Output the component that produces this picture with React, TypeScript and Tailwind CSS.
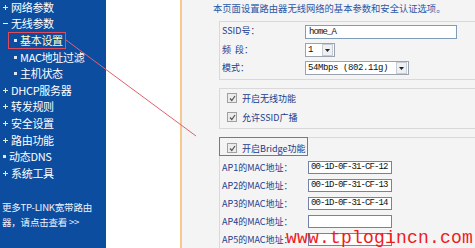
import React from "react";

type Item = { b: "+" | "-" | "dot"; t: string; sub?: boolean; active?: boolean };

const items: Item[] = [
  { b: "+", t: "网络参数" },
  { b: "-", t: "无线参数" },
  { b: "dot", t: "基本设置", sub: true, active: true },
  { b: "dot", t: "MAC地址过滤", sub: true },
  { b: "dot", t: "主机状态", sub: true },
  { b: "+", t: "DHCP服务器" },
  { b: "+", t: "转发规则" },
  { b: "+", t: "安全设置" },
  { b: "+", t: "路由功能" },
  { b: "dot", t: "动态DNS" },
  { b: "+", t: "系统工具" },
];

function Bullet({ b }: { b: Item["b"] }) {
  if (b === "+")
    return (
      <svg width="5" height="5" viewBox="0 0 5 5" className="shrink-0">
        <rect x="2" y="0" width="1" height="5" fill="#d8f2d0" />
        <rect x="0" y="2" width="5" height="1" fill="#d8f2d0" />
      </svg>
    );
  if (b === "-")
    return (
      <svg width="5" height="5" viewBox="0 0 5 5" className="shrink-0">
        <rect x="0" y="2" width="5" height="1" fill="#e6f0ff" />
      </svg>
    );
  return <span className="block w-[3px] h-[3px] bg-[#dfe8ff] shrink-0" />;
}

function Check() {
  return (
    <span className="flex items-center justify-center w-[10px] h-[10px] border border-[#a0a0a0] bg-[#ececec] shrink-0">
      <svg width="7" height="7" viewBox="0 0 7 7">
        <path d="M1 3.5 L2.8 5.5 L6 1" stroke="#555" strokeWidth="1.2" fill="none" />
      </svg>
    </span>
  );
}

function Select({ value, w }: { value: string; w: string }) {
  return (
    <div className={`flex items-center h-[14px] border border-[#9aa3ad] bg-white ${w}`}>
      <span className="flex-1 pl-[2px] font-['Liberation_Mono',monospace] text-[9px] tracking-[-0.4px] text-[#111] leading-none whitespace-nowrap overflow-hidden">
        {value}
      </span>
      <span className="flex items-center justify-center w-[11px] h-[12px] mr-[1px] bg-[#eef0f4] border border-[#c8ccd4]">
        <svg width="5" height="3" viewBox="0 0 5 3">
          <path d="M0 0 H5 L2.5 3 Z" fill="#222" />
        </svg>
      </span>
    </div>
  );
}

const macs = ["00-1D-0F-31-CF-12", "00-1D-0F-31-CF-13", "00-1D-0F-31-CF-14", "", ""];

export default function App() {
  return (
    <div className="relative flex w-[475px] h-[248px] overflow-hidden bg-white font-['Noto_Sans_CJK_SC',sans-serif]">
      {/* sidebar */}
      <div className="w-[106px] h-full bg-[#0c4d9f] text-white text-[11px] flex flex-col shrink-0">
        <div className="flex flex-col -mt-[1px]">
          {items.map((it) => (
            <div key={it.t} className={`flex items-center h-[16.6px] ${it.sub ? "pl-[14px] gap-[3px]" : "pl-[3px] gap-[3px]"}`}>
              <Bullet b={it.b} />
              <span className={`leading-none whitespace-nowrap tracking-[-0.3px] ${it.active ? "text-[#fbffc8]" : "text-white"}`}>{it.t}</span>
            </div>
          ))}
        </div>
        <div className="mt-[18px] pl-[2px] leading-[15px] text-[9.5px] tracking-[-0.2px] text-[#eef3ff] whitespace-nowrap">
          更多TP-LINK宽带路由
          <br />
          器，请点击查看 &gt;&gt;
        </div>
      </div>

      {/* white gap */}
      <div className="w-[74px] h-full bg-white shrink-0" />
      {/* orange line */}
      <div className="w-[2px] h-full bg-[#f7c88e] shrink-0" />

      {/* content */}
      <div className="flex-1 h-full bg-[#f4f4f5] pl-[31px] text-[9px] text-[#1b3b8a] flex flex-col">
        <div className="h-[21px] pt-[3px] leading-[11px] text-[9.3px] text-[#2c56a6] whitespace-nowrap">
          本页面设置路由器无线网络的基本参数和安全认证选项。
        </div>

        {/* box 1 */}
        <div className="ml-[6px] h-[59px] border-y border-l border-[#d9d9d9] pl-[2px] pt-[3px] flex flex-col gap-[4px] shrink-0">
          <div className="flex items-center h-[14px]">
            <span className="w-[83px] leading-none -mt-[3px]">SSID号：</span>
            <div className="flex items-center w-[152px] h-[14px] border border-[#7f9db9] bg-white pl-[3px] font-['Liberation_Mono',monospace] text-[9px] tracking-[-0.9px] text-[#111] leading-none">
              home_A
            </div>
          </div>
          <div className="flex items-center h-[14px]">
            <span className="w-[83px] leading-none -mt-[2px]">频&nbsp;&nbsp;段：</span>
            <Select value="1" w="w-[30px]" />
          </div>
          <div className="flex items-center h-[14px]">
            <span className="w-[83px] leading-none -mt-[2px]">模式：</span>
            <Select value="54Mbps (802.11g)" w="w-[104px]" />
          </div>
        </div>

        <div className="h-[8px] shrink-0" />

        {/* box 2 */}
        <div className="ml-[6px] h-[41px] border-y border-l border-[#d9d9d9] pl-[7px] flex flex-col shrink-0">
          <div className="flex items-center gap-[5px] h-[18px]">
            <Check />
            <span className="leading-none">开启无线功能</span>
          </div>
          <div className="flex items-center gap-[5px] h-[20px]">
            <Check />
            <span className="leading-none">允许SSID广播</span>
          </div>
        </div>

        <div className="h-[8px] shrink-0" />

        {/* box 3 */}
        <div className="ml-[6px] flex-1 border-t border-l border-[#d9d9d9] flex flex-col">
          <div className="flex items-center gap-[5px] h-[20px] pl-[7px]">
            <Check />
            <span className="leading-none">开启Bridge功能</span>
          </div>
          {macs.map((m, i) => (
            <div key={i} className="flex items-center h-[18px] pl-[2px]">
              <span className="w-[86px] leading-none whitespace-nowrap">AP{i + 1}的MAC地址：</span>
              <div className="flex items-center w-[84px] h-[13px] border border-[#7482aa] bg-white pl-[2px] font-['Liberation_Mono',monospace] text-[9px] tracking-[-0.9px] text-[#111] leading-none whitespace-nowrap">
                {m}
              </div>
            </div>
          ))}
        </div>
      </div>

      {/* annotations */}
      <svg className="absolute inset-0 pointer-events-none" width="475" height="248" viewBox="0 0 475 248">
        <rect x="8.5" y="32.5" width="57" height="16" fill="none" stroke="#e04a5a" strokeWidth="1" />
        <line x1="66" y1="40" x2="196" y2="136" stroke="#e2606e" strokeWidth="1" />
        <rect x="219.5" y="137.5" width="88" height="18" fill="none" stroke="#e04a5a" strokeWidth="1" />
      </svg>

      {/* watermark */}
      <div className="absolute left-[286px] top-[229px] font-['Liberation_Mono',monospace] text-[18px] leading-[18px] tracking-[0.2px] text-[#ee1c1c] whitespace-nowrap">
        www.tplogincn.com
      </div>
    </div>
  );
}
